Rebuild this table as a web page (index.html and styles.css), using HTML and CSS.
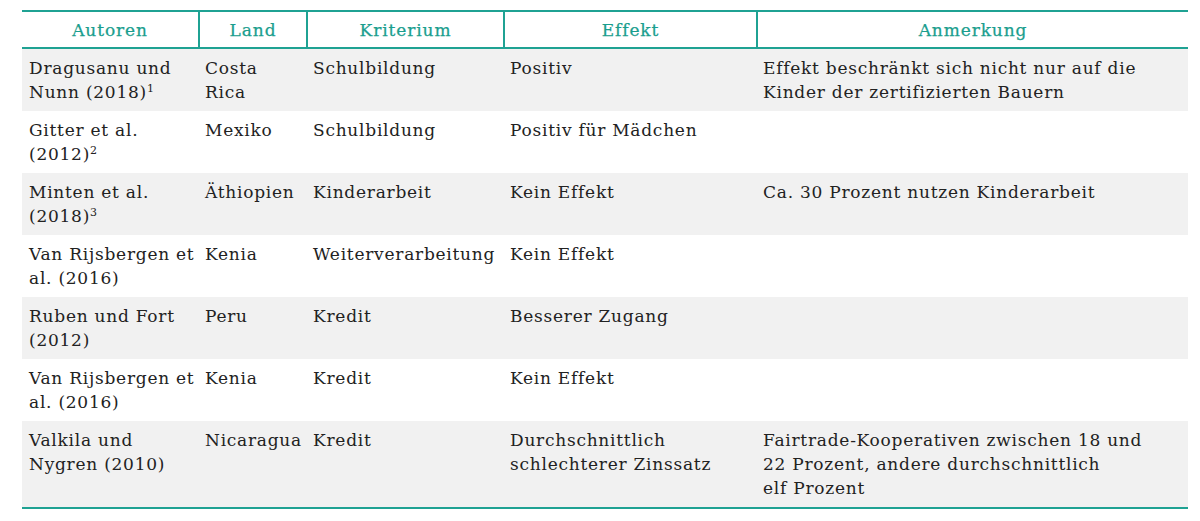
FILE: index.html
```html
<!DOCTYPE html>
<html lang="de">
<head>
<meta charset="utf-8">
<link rel="stylesheet" href="styles.css">
</head>
<body>
<table class="studies">
  <colgroup>
    <col class="c1"><col class="c2"><col class="c3"><col class="c4"><col class="c5">
  </colgroup>
  <thead>
    <tr><th>Autoren</th><th>Land</th><th>Kriterium</th><th>Effekt</th><th>Anmerkung</th></tr>
  </thead>
  <tbody>
    <tr><td>Dragusanu und Nunn (2018)<sup>1</sup></td><td>Costa Rica</td><td>Schulbildung</td><td>Positiv</td><td class="note">Effekt beschränkt sich nicht nur auf die Kinder der zertifizierten Bauern</td></tr>
    <tr><td>Gitter et al. (2012)<sup>2</sup></td><td>Mexiko</td><td>Schulbildung</td><td>Positiv für Mädchen</td><td class="note"></td></tr>
    <tr><td>Minten et al. (2018)<sup>3</sup></td><td>Äthiopien</td><td>Kinderarbeit</td><td>Kein Effekt</td><td class="note">Ca. 30 Prozent nutzen Kinderarbeit</td></tr>
    <tr><td>Van Rijsbergen et al. (2016)</td><td>Kenia</td><td>Weiterverarbeitung</td><td>Kein Effekt</td><td class="note"></td></tr>
    <tr><td>Ruben und Fort (2012)</td><td>Peru</td><td>Kredit</td><td>Besserer Zugang</td><td class="note"></td></tr>
    <tr><td>Van Rijsbergen et al. (2016)</td><td>Kenia</td><td>Kredit</td><td>Kein Effekt</td><td class="note"></td></tr>
    <tr><td>Valkila und Nygren (2010)</td><td>Nicaragua</td><td>Kredit</td><td>Durchschnittlich schlechterer Zinssatz</td><td class="note">Fairtrade-Kooperativen zwischen 18 und 22 Prozent, andere durchschnittlich elf&nbsp;Prozent</td></tr>
  </tbody>
</table>
</body>
</html>
```
FILE: styles.css
```css
html, body {
  margin: 0;
  padding: 0;
  background: #ffffff;
}
body {
  padding: 10px 12px 0 22px;
}
.studies {
  border-collapse: collapse;
  table-layout: fixed;
  width: 1166px;
  font-family: "DejaVu Serif", "Liberation Serif", serif;
  color: #222222;
}
.c1 { width: 177px; }
.c2 { width: 108px; }
.c3 { width: 197px; }
.c4 { width: 253px; }
.c5 { width: 431px; }
.studies thead tr {
  border-top: 2px solid #1fa293;
  border-bottom: 2px solid #1fa293;
}
.studies th {
  height: 35px;
  padding: 0 6px;
  font-size: 17px;
  font-weight: normal;
  letter-spacing: 0.9px;
  color: #1a9e8e;
  text-align: center;
  vertical-align: middle;
  border-left: 2px solid #1fa293;
  -webkit-text-stroke: 0.25px #1a9e8e;
}
.studies th:first-child { border-left: none; }
.studies td {
  padding: 7px 5px 7px 6px;
  font-size: 17px;
  line-height: 24px;
  letter-spacing: 0.75px;
  vertical-align: top;
}
.studies td:first-child {
  padding-left: 7px;
  padding-right: 1px;
}
.studies td.note { padding-right: 40px; }
.studies tbody tr:nth-child(odd) { background: #f1f1f1; }
.studies tbody tr:last-child { border-bottom: 2px solid #1fa293; }
.studies sup {
  font-size: 11px;
  line-height: 0;
  vertical-align: 6px;
}
```
